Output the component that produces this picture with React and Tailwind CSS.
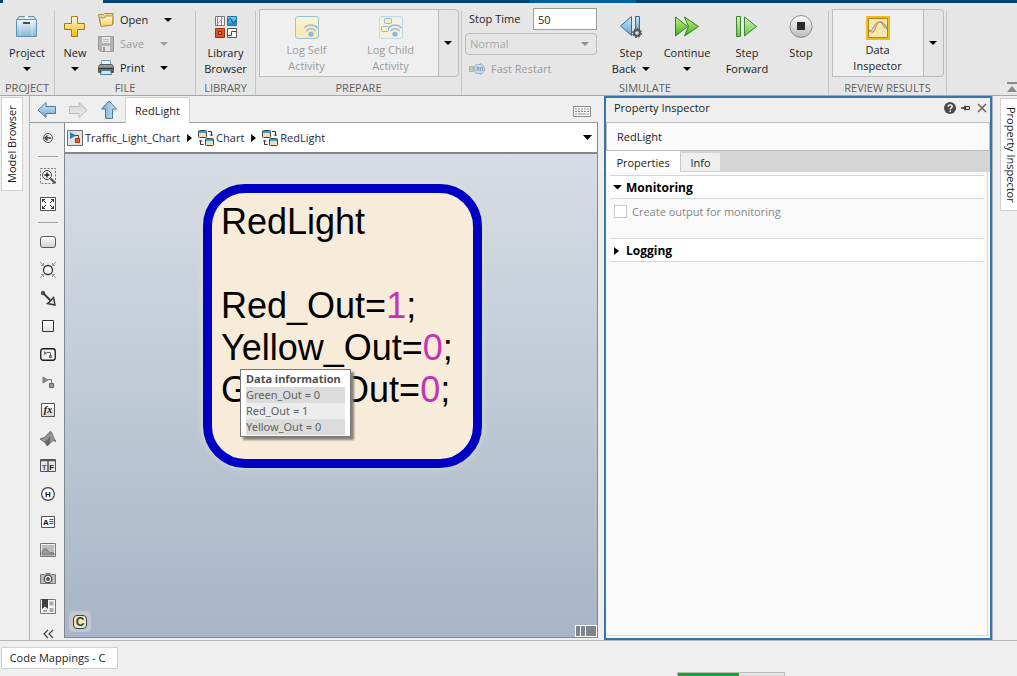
import React from "react";

/* ---------- small shared pieces ---------- */

function Caret({ className = "text-black" }) {
  return (
    <svg width="8" height="4" viewBox="0 0 8 4" className={`shrink-0 ${className}`} aria-hidden="true">
      <path d="M0 0h8L4 4z" fill="currentColor" />
    </svg>
  );
}

function Svg({ w, h = w, children }) {
  return (
    <svg width={w} height={h} viewBox={`0 0 ${w} ${h}`} className="block shrink-0" fill="none" aria-hidden="true">
      {children}
    </svg>
  );
}

function Grad({ id, from, to }) {
  return (
    <defs>
      <linearGradient id={id} x1="0" y1="0" x2="0" y2="1">
        <stop offset="0" stopColor={from} />
        <stop offset="1" stopColor={to} />
      </linearGradient>
    </defs>
  );
}

/* ---------- toolstrip icons ---------- */

const ProjectIcon = () => (
  <Svg w={24}>
    <Grad id="proj" from="#f0f7fb" to="#86b6d6" />
    <path d="M4 1.500h15l2 4H2z" fill="#d3e3ee" stroke="#6b92ad" />
    <path d="M10 1h3v4h-3z" fill="#fff" />
    <path d="M1.500 4.500h20v17h-20z" fill="url(#proj)" stroke="#5f93b4" />
    <path d="M8 7h7v2H8z" fill="#41525f" />
    <path d="M5 5v16M17 5v16" stroke="#fff" opacity=".45" />
  </Svg>
);

const NewIcon = () => (
  <Svg w={24}>
    <Grad id="plus" from="#fffbe0" to="#f2b90c" />
    <path d="M8.500 1.500h6v7h7v6h-7v7h-6v-7h-7v-6h7z" fill="url(#plus)" stroke="#a87808" />
  </Svg>
);

const OpenIcon = () => (
  <Svg w={16}>
    <Grad id="fold" from="#fffbd9" to="#f3cf64" />
    <path d="M.5 2.500h5l1-1h8.500v10.500l-12 2L.5 3z" fill="#f0d78c" stroke="#a08a5a" />
    <path d="M3 14.500L1.500 5.500l5 .5 1-2h7.500l-.5 9z" fill="url(#fold)" stroke="#b38c33" />
  </Svg>
);

const SaveIcon = () => (
  <Svg w={16}>
    <path d="M.5.5h15v15H2.500l-2-2z" fill="#b2b2b2" stroke="#9a9a9a" />
    <path d="M4 1h8v6H4z" fill="#e9e9e9" />
    <path d="M5 3.500h6M5 5.500h6" stroke="#bbb" />
    <path d="M4 10h8v5H4z" fill="#e3e3e3" />
    <path d="M5 11h2v4H5z" fill="#999" />
  </Svg>
);

const PrintIcon = () => (
  <Svg w={16}>
    <Grad id="prn" from="#a8a8a8" to="#4a4a4a" />
    <path d="M3.500.5h9v6h-9z" fill="#e8f3fb" stroke="#7898ae" />
    <path d="M.5 6.500l1.500-2h12l1.500 2v6h-15z" fill="url(#prn)" stroke="#5a5a5a" />
    <path d="M1 8.500h14" stroke="#333" />
    <path d="M3.500 10.500h9l1 4h-11z" fill="#cfe5f4" stroke="#567e9b" />
  </Svg>
);

const LibraryIcon = () => (
  <Svg w={24}>
    <Grad id="libb" from="#7cd0f2" to="#128cc7" />
    <path d="M1.500 1.500h9v9h-9z" fill="#f7f7f7" stroke="#777" />
    <path d="M3.500 2v8M3.500 9l5-6M7.500 2v8" stroke="#8b9298" />
    <path d="M13.500 1.500h9v9h-9z" fill="url(#libb)" stroke="#27719b" />
    <path d="M14 6c2-4 3-3 4 0s2 3 4-1" stroke="#0b4f78" />
    <path d="M1.500 13.500h9v9h-9z" fill="#dc5527" stroke="#a2330f" />
    <path d="M4.500 16.500h3v3h-3z" fill="#f08a5c" stroke="#7e2208" />
    <path d="M13.500 13.500h9v9h-9z" fill="#f7f7f7" stroke="#555" />
    <path d="M14 20.500h3.500v-4H22" stroke="#444" />
  </Svg>
);

function Wifi({ x, y }) {
  return (
    <g transform={`translate(${x} ${y})`}>
      <circle cx="7" cy="10" r="2.600" fill="#8fb4da" />
      <path d="M2.500 7a5.500 5.500 0 0 1 9 0M.5 4a8.500 8.500 0 0 1 13 0" stroke="#9fbcd6" strokeWidth="1.600" />
    </g>
  );
}

const LogSelfIcon = () => (
  <Svg w={24}>
    <Grad id="lself" from="#faf3d6" to="#f6e7b4" />
    <rect x=".5" y=".5" width="23" height="22" rx="2.500" fill="url(#lself)" stroke="#93c3da" />
    <Wifi x={9} y={8} />
  </Svg>
);

const LogChildIcon = () => (
  <Svg w={24}>
    <rect x=".5" y=".5" width="23" height="22" rx="2.500" fill="#f5f1de" stroke="#b9dce8" />
    <rect x="5.500" y="2.500" width="7" height="5" rx="1" fill="#faeebb" stroke="#8fb9dc" />
    <rect x="2.500" y="10.500" width="7" height="5" rx="1" fill="#faeebb" stroke="#8fb9dc" />
    <Wifi x={9} y={8} />
  </Svg>
);

const RestartIcon = () => (
  <Svg w={16} h={12}>
    <path d="M.5 3.500h4v5h-4z" fill="#b9d6a6" stroke="#a5b89b" />
    <path d="M5.500 8V4.500a3 3 0 0 1 3-3h3V.5l4 3.500v4l-3.500 3.500v-1h-3.500a3 3 0 0 1-3-2.500z" fill="#c9d9e6" stroke="#9db4c6" />
    <path d="M8 8V4.500h2V8M8 6h2M11.500 8V4.500h2V8" stroke="#8ea4b6" />
  </Svg>
);

const StepBackIcon = () => (
  <Svg w={24}>
    <Grad id="sb" from="#c8e4f7" to="#63a4d4" />
    <path d="M12.500 1.500v19L1.500 11z" fill="url(#sb)" stroke="#356a99" />
    <path d="M16.500 1.500h4v15h-4z" fill="url(#sb)" stroke="#356a99" />
    <circle cx="18" cy="18" r="4" fill="#5b5b5b" />
    <circle cx="18" cy="18" r="4.500" stroke="#444" strokeDasharray="2 1.500" />
    <circle cx="18" cy="18" r="1.800" fill="#e5e5e5" />
  </Svg>
);

const ContinueIcon = () => (
  <Svg w={26} h={24}>
    <Grad id="ct" from="#c6ee8c" to="#49b01b" />
    <path d="M1.500 2v19l12-9.500z" fill="url(#ct)" stroke="#2f8414" />
    <path d="M10.500 2l4 9.500-4 9.500L24.500 11.500z" fill="url(#ct)" stroke="#2f8414" />
  </Svg>
);

const StepForwardIcon = () => (
  <Svg w={24}>
    <Grad id="sf" from="#d6f3bd" to="#6cc23f" />
    <path d="M1.500 1.500h4v20h-4z" fill="url(#sf)" stroke="#3b8632" />
    <path d="M9.500 2v19l12-9.500z" fill="url(#sf)" stroke="#3b8632" />
  </Svg>
);

const StopIcon = () => (
  <Svg w={24}>
    <Grad id="stp" from="#ffffff" to="#b9b9b9" />
    <circle cx="12" cy="11.500" r="11" fill="url(#stp)" stroke="#8a8a8a" />
    <path d="M8 7h8v8H8z" fill="#2b2b2b" />
  </Svg>
);

const InspectorIcon = () => (
  <Svg w={24}>
    <path d="M1 1h22v22H1z" fill="#f6e7ae" stroke="#f2bb16" strokeWidth="2" />
    <path d="M2.500 2.500h19v19h-19z" stroke="#a98530" />
    <path d="M3 15c4 2 5-9 10-9s3 6 8 7" stroke="#8cb3a4" strokeWidth="1.200" />
    <path d="M3 14c5 6 6-2 8-6s6-3 10 4" stroke="#e08d5b" strokeWidth="1.200" />
  </Svg>
);

/* ---------- toolstrip ---------- */

function Section({ label, className, children }) {
  return (
    <section className={`flex shrink-0 flex-col ${className}`}>
      <div className="flex min-h-0 flex-1 justify-center">{children}</div>
      <h2 className="h-3.5 text-center leading-[14px] text-[#5f5f5f]">{label}</h2>
    </section>
  );
}

const Divider = () => <div className="mt-2 w-px shrink-0 bg-[#c6c6c6]" />;

function BigButton({ icon, lines, caret, className = "w-14" }) {
  return (
    <button className={`flex shrink-0 flex-col items-center pt-3 ${className}`}>
      <span className="flex h-[30px] items-start">{icon}</span>
      {lines.map((l, i) => (
        <span key={l} className="flex items-center gap-1.5 whitespace-nowrap">
          {l}
          {caret === "inline" && i === lines.length - 1 && <Caret />}
        </span>
      ))}
      {caret === "below" && (
        <span className="flex h-4 items-center">
          <Caret />
        </span>
      )}
    </button>
  );
}

function FileRow({ icon, label, disabled, wide }) {
  return (
    <div className={`flex h-6 items-center ${disabled ? "text-[#9c9c9c]" : ""}`}>
      <button disabled={disabled} className={`flex items-center gap-1.5 text-left ${wide ? "w-[62px]" : "w-[58px]"}`}>
        {icon}
        {label}
      </button>
      <button disabled={disabled} aria-label={`${label} options`} className="flex h-6 w-4 items-center justify-center">
        <Caret className={disabled ? "text-[#9c9c9c]" : "text-black"} />
      </button>
    </div>
  );
}

function GalleryButton({ icon, lines, disabled, className }) {
  return (
    <button disabled={disabled} className={`flex flex-col items-center pt-1.5 ${disabled ? "text-[#9c9c9c]" : ""} ${className}`}>
      <span className="flex h-[26px] items-start">{icon}</span>
      {lines.map((l) => (
        <span key={l} className="whitespace-nowrap">{l}</span>
      ))}
    </button>
  );
}

function Gallery({ label, children }) {
  return (
    <div className="mt-1.5 flex h-[68px] overflow-hidden rounded-r border border-[#bcbcbc]">
      <div className="flex bg-[#efefef]">{children}</div>
      <button aria-label={label} className="flex w-5 items-center justify-center border-l border-[#bcbcbc]">
        <Caret />
      </button>
    </div>
  );
}

function Toolstrip() {
  return (
    <header className="flex h-[93px] shrink-0 border-b border-[#a7a7a7] bg-[#e6e6e6]">
      <Section label="PROJECT" className="w-[54px]">
        <BigButton icon={<ProjectIcon />} lines={["Project"]} caret="below" />
      </Section>
      <Divider />
      <Section label="FILE" className="w-[140px]">
        <BigButton icon={<NewIcon />} lines={["New"]} caret="below" className="w-10" />
        <div className="flex flex-1 flex-col pl-[3px] pt-[5px]">
          <FileRow icon={<OpenIcon />} label="Open" wide />
          <FileRow icon={<SaveIcon />} label="Save" disabled />
          <FileRow icon={<PrintIcon />} label="Print" />
        </div>
      </Section>
      <Divider />
      <Section label="LIBRARY" className="w-[59px]">
        <BigButton icon={<LibraryIcon />} lines={["Library", "Browser"]} />
      </Section>
      <Divider />
      <Section label="PREPARE" className="w-[205px]">
        <Gallery label="More prepare actions">
          <GalleryButton icon={<LogSelfIcon />} lines={["Log Self", "Activity"]} disabled className="w-[94px]" />
          <GalleryButton icon={<LogChildIcon />} lines={["Log Child", "Activity"]} disabled className="mr-2.5 w-[74px]" />
        </Gallery>
      </Section>
      <Divider />
      <Section label="SIMULATE" className="w-[366px]">
        <div className="mr-1.5 flex w-[135px] shrink-0 flex-col gap-[3px] pl-[3px] pt-[5px]">
          <div className="flex items-center justify-between pl-1">
            <label htmlFor="stop-time">Stop Time</label>
            <input id="stop-time" defaultValue="50" className="h-[22px] w-16 rounded-none border border-[#9b9b9b] bg-white px-1 outline-none" />
          </div>
          <div className="relative flex items-center">
            <select disabled aria-label="Simulation mode" className="h-[22px] w-full appearance-none rounded border border-[#bdbdbd] bg-transparent px-1 leading-4 text-[#a6a6a6] opacity-100">
              <option>Normal</option>
            </select>
            <span className="absolute right-2">
              <Caret className="text-[#8e8e8e]" />
            </span>
          </div>
          <button disabled className="flex h-[22px] items-center gap-1.5 pl-1 text-[#9c9c9c]">
            <RestartIcon />
            Fast Restart
          </button>
        </div>
        <BigButton icon={<StepBackIcon />} lines={["Step", "Back"]} caret="inline" />
        <BigButton icon={<ContinueIcon />} lines={["Continue"]} caret="below" />
        <BigButton icon={<StepForwardIcon />} lines={["Step", "Forward"]} className="w-16" />
        <BigButton icon={<StopIcon />} lines={["Stop"]} className="mr-auto w-11" />
      </Section>
      <Divider />
      <Section label="REVIEW RESULTS" className="w-[117px]">
        <Gallery label="More review actions">
          <GalleryButton icon={<InspectorIcon />} lines={["Data", "Inspector"]} className="w-[90px]" />
        </Gallery>
      </Section>
      <Divider />
      <div className="flex flex-1 items-end justify-end overflow-hidden pb-0.5">
        <button aria-label="Minimize toolstrip">
          <Svg w={10} h={11}>
            <path d="M0 0h10v2H0z" fill="#8c8c8c" />
            <path d="M5 4l5 6H0z" fill="#8c8c8c" />
          </Svg>
        </button>
      </div>
    </header>
  );
}

/* ---------- palette ---------- */

const paletteIcons = [
  ["Hide explorer bar", <Svg w={16}><circle cx="8" cy="8" r="4.500" stroke="#555" /><path d="M5 8h6M7.500 5.500L5 8l2.500 2.500" stroke="#444" strokeWidth="1.500" /></Svg>],
  null,
  ["Zoom", <Svg w={16}><path d="M.5.5h15v15H.5z" stroke="#777" strokeDasharray="2 1.500" /><circle cx="7" cy="7" r="4.500" fill="#fafafa" stroke="#444" /><path d="M4.500 7h5M7 4.500v5" stroke="#111" strokeWidth="1.300" /><path d="M10.500 10.500l4.500 4.500" stroke="#444" strokeWidth="2" /></Svg>],
  ["Fit to view", <Svg w={16} h={14}><path d="M.5.5h15v13H.5z" fill="#f8f8f8" stroke="#555" /><path d="M2.500 5V2.500H5M2.500 2.500L6 6M11 2.500h2.500V5M13.500 2.500L10 6M2.500 9v2.500H5M2.500 11.500L6 8M11 11.500h2.500V9M13.500 11.500L10 8" stroke="#333" /></Svg>],
  null,
  ["State", <Svg w={16} h={12}><Grad id="pst" from="#fff" to="#d0d0d0" /><rect x=".5" y=".5" width="15" height="11" rx="2.500" fill="url(#pst)" stroke="#555" /></Svg>],
  ["Junction", <Svg w={16}><circle cx="8" cy="8" r="4.500" fill="#f6f6f6" stroke="#333" strokeWidth="1.300" /><path d="M0 0l3.500 3.500M3.500 1v2.500H1M16 0l-3.500 3.500M12.500 1v2.500H15M0 16l3.500-3.500M1 12.500h2.500V15M16 16l-3.500-3.500M15 12.500h-2.500V15" stroke="#999" /></Svg>],
  ["Default transition", <Svg w={16}><circle cx="3" cy="3" r="2.200" fill="#555" /><path d="M3 3l8 8" stroke="#3c3c3c" strokeWidth="2" /><path d="M13.500 7.500l1.500 7.500-7.500-1.500 3-2.500z" fill="#eee" stroke="#333" strokeWidth="1.400" /></Svg>],
  ["Box", <Svg w={12}><Grad id="pbx" from="#fff" to="#e2e2e2" /><path d="M.5.5h11v11H.5z" fill="url(#pbx)" stroke="#333" /></Svg>],
  ["Simulink based state", <Svg w={16} h={13}><rect x=".75" y=".75" width="14.500" height="11.500" rx="2.500" fill="#f3f3ec" stroke="#1a1a1a" strokeWidth="1.300" /><path d="M4 3v4l3.500-2z" fill="#777" /><path d="M7 4.500h3.500V7" stroke="#666" /><path d="M9 7h3v3H9z" fill="#777" /></Svg>],
  ["Simulink function", <Svg w={14}><path d="M2 2v6l5-3z" fill="#8a8a8a" stroke="#777" /><path d="M7 4.500h3.500V8" stroke="#777" /><path d="M8.500 8.500h4v4h-4z" fill="#999" stroke="#666" /></Svg>],
  ["Graphical function", <Svg w={14}><Grad id="pfx" from="#fff" to="#d4d4d4" /><path d="M.5.5h13v13H.5z" fill="url(#pfx)" stroke="#555" /><text x="7" y="10" textAnchor="middle" fontFamily="Liberation Serif, serif" fontStyle="italic" fontWeight="700" fontSize="10" fill="#111">fx</text></Svg>],
  ["MATLAB function", <Svg w={16}><path d="M0 9l5-2 5-5.500c2-1 3 6 6 10l-3-1-3 3-3 2.500-2-3.500z" fill="#949494" stroke="#555" strokeWidth=".7" /><path d="M10 2c1 3-1 7-5 9.500l2.500 4 2.500-2z" fill="#666" /></Svg>],
  ["Truth table", <Svg w={16} h={14}><path d="M.5.5h15v12H.5z" fill="#e8e8e8" stroke="#555" /><path d="M.5 1.500h15M8 1v12" stroke="#555" strokeWidth="1.500" /><text x="4.300" y="11" textAnchor="middle" fontFamily="Liberation Sans, sans-serif" fontWeight="700" fontSize="8" fill="#555">T</text><text x="11.800" y="11" textAnchor="middle" fontFamily="Liberation Sans, sans-serif" fontWeight="700" fontSize="8" fill="#222">F</text></Svg>],
  ["History junction", <Svg w={14}><circle cx="7" cy="7" r="6.400" fill="#fafafa" stroke="#444" strokeWidth="1.200" /><text x="7" y="10" textAnchor="middle" fontFamily="Liberation Sans, sans-serif" fontWeight="700" fontSize="8" fill="#111">H</text></Svg>],
  ["Annotation", <Svg w={14} h={12}><path d="M.5.5h13v11H.5z" fill="#fafafa" stroke="#555" /><text x="5" y="9" textAnchor="middle" fontFamily="Liberation Sans, sans-serif" fontWeight="700" fontSize="8" fill="#111">A</text><path d="M8.500 3.500h4M8.500 5.500h4M8.500 7.500h4" stroke="#555" /></Svg>],
  ["Image", <Svg w={16} h={14}><path d="M.5.5h15v13H.5z" fill="#eee" stroke="#777" /><path d="M2 2h12v10H2z" fill="#bcbcbc" /><path d="M2 9c2-4 4-4 6-1s3 1 6 2v2H2z" fill="#999" stroke="#666" strokeWidth=".8" /></Svg>],
  ["Screenshot", <Svg w={16} h={13}><path d="M.5 2.500h4l1-1h5l1 1h4v9H.5z" fill="#bcbcbc" stroke="#777" /><circle cx="8" cy="7" r="3.800" fill="#eee" stroke="#444" strokeWidth="1.200" /><circle cx="8" cy="7" r="2" fill="#555" /></Svg>],
  ["Viewmarks", <Svg w={16} h={15}><path d="M.5.5h15v14H.5z" fill="#f4f4f4" stroke="#777" /><path d="M2 0h6v10L5 7.500 2 10z" fill="#3f3f3f" /><path d="M9.500 2.500h4v4h-4zM9.500 9h4v4h-4zM3 11h4v2H3z" fill="#aaa" /></Svg>],
];

function Palette() {
  return (
    <nav aria-label="Palette" className="flex w-[34px] shrink-0 flex-col items-center overflow-hidden pl-0.5 pt-px">
      {paletteIcons.map((item, i) =>
        item ? (
          <button key={item[0]} aria-label={item[0]} className="flex h-7 w-7 shrink-0 items-center justify-center">
            {item[1]}
          </button>
        ) : (
          <div key={i} className="mb-[5px] mt-1 h-px w-5 shrink-0 bg-[#a6a6a6]" />
        )
      )}
      <button aria-label="Collapse palette" className="flex h-7 w-7 shrink-0 items-center justify-center">
        <Svg w={11} h={10}>
          <path d="M5 1L1 5l4 4M10 1L6 5l4 4" stroke="#444" strokeWidth="1.200" />
        </Svg>
      </button>
    </nav>
  );
}

/* ---------- editor ---------- */

function NavArrow({ label, disabled, rotate, id }) {
  const stroke = disabled ? "#bdbdbd" : "#4b7b9f";
  return (
    <button aria-label={label} disabled={disabled} className="flex h-6 w-6 items-center justify-center">
      <Svg w={20}>
        <Grad id={id} from={disabled ? "#eee" : "#d2e9f7"} to={disabled ? "#d2d2d2" : "#6fa9d3"} />
        <path transform={`rotate(${rotate} 10 10)`} d="M1 10l8-7.500v4h9.500v7H9v4z" fill={`url(#${id})`} stroke={stroke} />
      </Svg>
    </button>
  );
}

const ModelIcon = () => (
  <Svg w={16}>
    <path d="M.5.5h15v15H.5z" fill="#e3e3e3" stroke="#6d6d6d" />
    <path d="M3 2v7l6-3.500z" fill="#2a83b8" />
    <path d="M8 5.500h3.500V8" stroke="#444" />
    <path d="M8.500 8.500h4v4h-4z" fill="#e8622d" stroke="#9c3711" />
  </Svg>
);

const ChartIcon = () => (
  <Svg w={16}>
    <rect x=".5" y=".5" width="8" height="7" rx="1" fill="#f0dfb4" stroke="#444" />
    <path d="M1 1h7v2H1z" fill="#35a3cf" />
    <rect x="7.500" y="8.500" width="8" height="7" rx="1" fill="#f0dfb4" stroke="#444" />
    <path d="M8 9h7v2H8z" fill="#35a3cf" />
    <path d="M10 1.500h3.500V6M12 4.500l1.500 1.500L15 4.500M5.500 14.500H2.500V10M1 11.500L2.500 10 4 11.500" stroke="#333" />
  </Svg>
);

const crumbs = [
  ["Traffic_Light_Chart", <ModelIcon />],
  ["Chart", <ChartIcon />],
  ["RedLight", <ChartIcon />],
];

function Breadcrumbs() {
  return (
    <div className="flex h-[31px] shrink-0 items-center border-b-2 border-[#83878f] bg-white pl-0.5 pr-[5px]">
      <nav aria-label="Breadcrumb" className="flex flex-1 items-center text-[#2a2a3a]">
        {crumbs.map(([name, icon], i) => (
          <React.Fragment key={name}>
            {i > 0 && (
              <Svg w={18} h={8}>
                <path d="M7 0v8l5-4z" fill="#000" />
              </Svg>
            )}
            <a href="#" className="flex items-center gap-0.5">
              {icon}
              {name}
            </a>
          </React.Fragment>
        ))}
      </nav>
      <button aria-label="Breadcrumb history">
        <Svg w={9} h={5}>
          <path d="M0 0h9L4.500 5z" fill="#000" />
        </Svg>
      </button>
    </div>
  );
}

const dataRows = ["Green_Out = 0", "Red_Out = 1", "Yellow_Out = 0"];

function Canvas() {
  return (
    <main className="relative min-h-0 flex-1 bg-gradient-to-b from-[#d7dde4] via-[#bfcad6] to-[#a8b5c8]">
      <div className="absolute left-[138px] top-[30px] h-[284px] w-[279px] rounded-[42px] border-[9px] border-[#0000c4] bg-[#f7ebda] px-[9px] py-2 font-['Liberation_Sans',sans-serif] text-[36px] leading-[42px] text-black shadow-[0_0_6px_#dfe5c8]">
        <p>RedLight</p>
        <p className="mt-[42px]">Red_Out=<span className="text-[#c434b4]">1</span>;</p>
        <p>Yellow_Out=<span className="text-[#c434b4]">0</span>;</p>
        <p>Green_Out=<span className="text-[#c434b4]">0</span>;</p>
      </div>
      <div role="tooltip" className="absolute left-[175px] top-[215px] w-[111px] border border-[#767676] bg-white px-[5px] pb-px pt-px font-['Noto_Sans',sans-serif] text-[11px] leading-4 text-[#606060] shadow-[3px_3px_2px_#8a8378]">
        <p className="whitespace-nowrap font-bold text-[#505050]">Data information</p>
        {dataRows.map((row) => (
          <p key={row} className="odd:bg-[#ededed] even:bg-[#dcdcdc]">{row}</p>
        ))}
      </div>
      <div className="absolute bottom-[5px] left-1 flex h-[21px] w-[22px] items-center justify-center rounded bg-[#c3c6ca]">
        <span className="flex h-3.5 w-3.5 items-center justify-center rounded-sm border border-[#26436b] bg-[#f8e7a5] font-['Liberation_Sans',sans-serif] text-[12px] font-bold leading-3 text-[#223f68]">C</span>
      </div>
      <div className="absolute bottom-0 right-0 flex h-3 gap-px border border-white bg-white">
        <span className="w-1 bg-[#808388]" />
        <span className="w-1 bg-[#808388]" />
        <span className="w-2.5 bg-[#808388]" />
      </div>
    </main>
  );
}

function Editor() {
  return (
    <div className="flex min-w-0 flex-1 flex-col pr-1.5">
      <div className="flex h-[27px] shrink-0 items-end border-b border-[#9a9ca1] pl-[5px]">
        <div className="flex w-[90px] gap-[7px]">
          <NavArrow id="nb" label="Back" rotate={0} />
          <NavArrow id="nf" label="Forward" rotate={180} disabled />
          <NavArrow id="nu" label="Up" rotate={90} />
        </div>
        <button className="-mb-px h-[26px] w-[65px] border border-b-0 border-[#d0d0d0] bg-white pt-px">RedLight</button>
        <div className="flex flex-1 justify-end pb-[5px] pr-[7px]">
          <Svg w={18} h={11}>
            <path d="M.5.5h17v10H.5z" fill="#f6f6f6" stroke="#8b8b8b" />
            <path d="M2 3h14M2 5.500h14" stroke="#8b8b8b" strokeDasharray="2 1" />
            <path d="M2 8h2M5 8h8M14 8h2" stroke="#8b8b8b" />
          </Svg>
        </div>
      </div>
      <div className="flex min-h-0 flex-1">
        <Palette />
        <div className="mb-0.5 flex min-w-0 flex-1 flex-col border border-t-0 border-[#83878f]">
          <Breadcrumbs />
          <Canvas />
        </div>
      </div>
    </div>
  );
}

/* ---------- property inspector ---------- */

function GroupHeader({ title, open }) {
  return (
    <button aria-expanded={open} className="flex h-6 w-full items-center gap-0.5 border-y border-[#d6d6d6] bg-white pl-[3px] pt-px text-left text-[12px] font-bold text-black">
      <Svg w={10}>
        {open ? <path d="M0 2h9L4.500 6.500z" fill="#000" /> : <path d="M1 1v8l5-4z" fill="#000" />}
      </Svg>
      <span className="pl-px">{title}</span>
    </button>
  );
}

function PropertyInspector() {
  return (
    <aside className="flex w-[388px] shrink-0 flex-col border-2 border-[#3576ac] bg-[#fafafa]">
      <div className="flex h-6 shrink-0 items-center bg-[#efefef] pl-2 pr-0.5">
        <h2 className="flex-1 pb-1">Property Inspector</h2>
        <div className="flex items-center gap-1 pb-1">
          <button aria-label="Help">
            <Svg w={12}>
              <circle cx="6" cy="6" r="6" fill="#4a4a4a" />
              <path d="M4 4.800C4 2.300 8.200 2.300 8.200 4.600 8.200 6 6.200 5.900 6.200 7.600M6.200 8.500V10" stroke="#fff" strokeWidth="1.400" />
            </Svg>
          </button>
          <button aria-label="Pin">
            <Svg w={12}>
              <path d="M1 6h4M5 3.500v5" stroke="#333" strokeWidth="1.300" />
              <path d="M5.500 4.500h4v3h-4z" fill="#ddd" stroke="#333" />
            </Svg>
          </button>
          <button aria-label="Close">
            <Svg w={12}>
              <path d="M2 2l8 8M10 2l-8 8" stroke="#666" strokeWidth="1.500" />
            </Svg>
          </button>
        </div>
      </div>
      <div className="flex h-[29px] shrink-0 items-center border border-[#bdbdbd] pl-2.5">RedLight</div>
      <div role="tablist" className="flex h-[21px] shrink-0 items-end bg-[#d5d5d5]">
        <button role="tab" aria-selected="true" className="h-full w-[74px] bg-white pt-0.5">Properties</button>
        <button role="tab" aria-selected="false" className="mb-px h-[18px] w-10 border-l border-[#c6c6c6] bg-[#efefef] pt-px">Info</button>
      </div>
      <div className="mx-0.5 mb-0.5 flex-1 border-b border-r border-[#d6d6d6] pl-0.5 pr-[3px] pt-[3px]">
        <GroupHeader title="Monitoring" open />
        <label className="flex h-[39px] items-start gap-[5px] pl-1 pt-1.5 text-[#868686]">
          <input type="checkbox" disabled className="h-[13px] w-[13px] appearance-none border border-[#c8c8c8] bg-white" />
          <span className="leading-[14px]">Create output for monitoring</span>
        </label>
        <GroupHeader title="Logging" open={false} />
      </div>
    </aside>
  );
}

/* ---------- page ---------- */

export default function App() {
  return (
    <div className="flex h-screen flex-col overflow-hidden bg-[#efefef] font-['Open_Sans',sans-serif] text-[11px] leading-4 text-[#1c1c1c]">
      <div className="flex h-[3px] shrink-0 bg-[#004474]">
        <div className="ml-[3px] w-[100px] bg-[#e6e6e6]" />
        <div className="ml-[427px] w-[106px] bg-[#005f9f]" />
      </div>
      <Toolstrip />
      <div className="flex min-h-0 flex-1">
        <div className="flex w-[30px] shrink-0 items-start border-r border-[#b5b5b5] pl-px pt-px">
          <button className="flex h-[94px] w-[22px] rotate-180 items-center justify-center border border-[#d0d0d0] bg-white [writing-mode:vertical-rl]">Model Browser</button>
        </div>
        <Editor />
        <PropertyInspector />
        <div className="flex w-[25px] shrink-0 items-start overflow-hidden border-l border-[#b5b5b5] pl-[7px] pt-0.5">
          <button className="flex h-[113px] w-[22px] shrink-0 items-center justify-center border border-[#d0d0d0] bg-white [writing-mode:vertical-rl]">Property Inspector</button>
        </div>
      </div>
      <footer className="flex h-9 shrink-0 border-t border-[#b5b5b5]">
        <button className="ml-px mt-1.5 h-[22px] w-[117px] border border-[#d0d0d0] bg-white pr-1">Code Mappings - C</button>
        <div role="progressbar" aria-label="Simulation progress" aria-valuenow="58" className="ml-[559px] mt-[31px] h-4 w-[108px] border border-[#bcbcbc] bg-[#e4e4e4]">
          <div className="h-full w-[58%] bg-[#10a827]" />
        </div>
      </footer>
    </div>
  );
}
